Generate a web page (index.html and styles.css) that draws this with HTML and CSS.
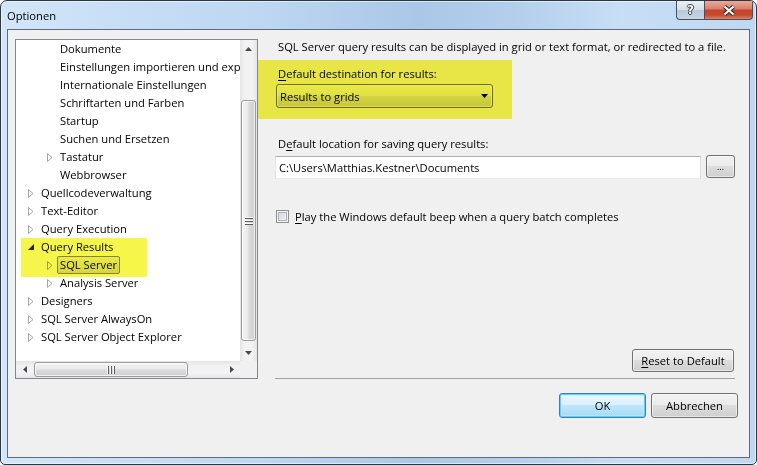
FILE: index.html
```html
<!DOCTYPE html>
<html lang="de">
<head>
<meta charset="utf-8">
<title>Optionen</title>
<link rel="stylesheet" href="styles.css">
</head>
<body>
<div class="window">
  <div class="titlebar">
    <span class="title">Optionen</span>
    <div class="caption-buttons">
      <div class="cap-btn help"><span>?</span></div>
      <div class="cap-btn close">
        <svg width="14" height="11" viewBox="0 0 14 11"><path d="M2.5 1.5 L11.5 9.5 M11.5 1.5 L2.5 9.5" stroke="#3b2622" stroke-width="4.2" fill="none"/><path d="M2.5 1.5 L11.5 9.5 M11.5 1.5 L2.5 9.5" stroke="#ffffff" stroke-width="2.2" fill="none"/></svg>
      </div>
    </div>
  </div>
  <div class="client">
    <div class="main">
      <div class="tree">
        <div class="tree-items">
          <div class="row l2"><span class="exp"></span><span class="lbl">Dokumente</span></div>
          <div class="row l2"><span class="exp"></span><span class="lbl">Einstellungen importieren und exportieren</span></div>
          <div class="row l2"><span class="exp"></span><span class="lbl">Internationale Einstellungen</span></div>
          <div class="row l2"><span class="exp"></span><span class="lbl">Schriftarten und Farben</span></div>
          <div class="row l2"><span class="exp"></span><span class="lbl">Startup</span></div>
          <div class="row l2"><span class="exp"></span><span class="lbl">Suchen und Ersetzen</span></div>
          <div class="row l2"><span class="exp"><svg width="6" height="9" viewBox="0 0 6 9"><path d="M0.5 0.5 L5 4.5 L0.5 8.5 Z" fill="#fff" stroke="#a6a6a6"/></svg></span><span class="lbl">Tastatur</span></div>
          <div class="row l2"><span class="exp"></span><span class="lbl">Webbrowser</span></div>
          <div class="row l1"><span class="exp"><svg width="6" height="9" viewBox="0 0 6 9"><path d="M0.5 0.5 L5 4.5 L0.5 8.5 Z" fill="#fff" stroke="#a6a6a6"/></svg></span><span class="lbl">Quellcodeverwaltung</span></div>
          <div class="row l1"><span class="exp"><svg width="6" height="9" viewBox="0 0 6 9"><path d="M0.5 0.5 L5 4.5 L0.5 8.5 Z" fill="#fff" stroke="#a6a6a6"/></svg></span><span class="lbl">Text-Editor</span></div>
          <div class="row l1"><span class="exp"><svg width="6" height="9" viewBox="0 0 6 9"><path d="M0.5 0.5 L5 4.5 L0.5 8.5 Z" fill="#fff" stroke="#a6a6a6"/></svg></span><span class="lbl">Query Execution</span></div>
          <div class="row l1"><span class="exp"><svg width="6" height="6" viewBox="0 0 6 6"><path d="M6 0 V6 H0 Z" fill="#262626"/></svg></span><span class="lbl">Query Results</span></div>
          <div class="row l2"><span class="exp"><svg width="6" height="9" viewBox="0 0 6 9"><path d="M0.5 0.5 L5 4.5 L0.5 8.5 Z" fill="#fff" stroke="#a6a6a6"/></svg></span><span class="lbl selected">SQL Server</span></div>
          <div class="row l2"><span class="exp"><svg width="6" height="9" viewBox="0 0 6 9"><path d="M0.5 0.5 L5 4.5 L0.5 8.5 Z" fill="#fff" stroke="#a6a6a6"/></svg></span><span class="lbl">Analysis Server</span></div>
          <div class="row l1"><span class="exp"><svg width="6" height="9" viewBox="0 0 6 9"><path d="M0.5 0.5 L5 4.5 L0.5 8.5 Z" fill="#fff" stroke="#a6a6a6"/></svg></span><span class="lbl">Designers</span></div>
          <div class="row l1"><span class="exp"><svg width="6" height="9" viewBox="0 0 6 9"><path d="M0.5 0.5 L5 4.5 L0.5 8.5 Z" fill="#fff" stroke="#a6a6a6"/></svg></span><span class="lbl">SQL Server AlwaysOn</span></div>
          <div class="row l1"><span class="exp"><svg width="6" height="9" viewBox="0 0 6 9"><path d="M0.5 0.5 L5 4.5 L0.5 8.5 Z" fill="#fff" stroke="#a6a6a6"/></svg></span><span class="lbl">SQL Server Object Explorer</span></div>
        </div>
        <div class="vscroll">
          <div class="sb-btn"><svg width="7" height="4" viewBox="0 0 7 4"><path d="M0 4 L3.5 0 L7 4 Z" fill="#4a4a4a"/></svg></div>
          <div class="vtrack">
            <div class="vthumb" style="margin-top:43px;height:241px">
              <svg width="8" height="8" viewBox="0 0 8 8"><path d="M0 1.5 H8 M0 4.5 H8 M0 7.5 H8" stroke="#5c5c5c"/><path d="M0 0.5 H8 M0 3.5 H8 M0 6.5 H8" stroke="#fafafa"/></svg>
            </div>
          </div>
          <div class="sb-btn"><svg width="7" height="4" viewBox="0 0 7 4"><path d="M0 0 L3.5 4 L7 0 Z" fill="#4a4a4a"/></svg></div>
        </div>
        <div class="hscroll">
          <div class="sb-btn"><svg width="4" height="7" viewBox="0 0 4 7"><path d="M4 0 L0 3.5 L4 7 Z" fill="#4a4a4a"/></svg></div>
          <div class="htrack">
            <div class="hthumb" style="margin-left:1px;width:154px">
              <svg width="8" height="8" viewBox="0 0 8 8"><path d="M1.5 0 V8 M4.5 0 V8 M7.5 0 V8" stroke="#5c5c5c"/><path d="M0.5 0 V8 M3.5 0 V8 M6.5 0 V8" stroke="#fafafa"/></svg>
            </div>
          </div>
          <div class="sb-btn"><svg width="4" height="7" viewBox="0 0 4 7"><path d="M0 0 L4 3.5 L0 7 Z" fill="#4a4a4a"/></svg></div>
        </div>
        <div class="corner"></div>
      </div>
      <div class="panel">
        <p class="desc">SQL Server query results can be displayed in grid or text format, or redirected to a file.</p>
        <div class="label l-dest"><u>D</u>efault destination for results:</div>
        <div class="combo"><span>Results to grids</span><svg width="7" height="4" viewBox="0 0 7 4"><path d="M0 0 H7 L3.5 4 Z" fill="#000"/></svg></div>
        <div class="label l-loc">D<u>e</u>fault location for saving query results:</div>
        <div class="path-row">
          <div class="textbox">C:\Users\Matthias.Kestner\Documents</div>
          <div class="btn browse">...</div>
        </div>
        <div class="check-row"><span class="checkbox"></span><span class="check-label"><u>P</u>lay the Windows default beep when a query batch completes</span></div>
        <div class="reset-row"><div class="btn reset"><u>R</u>eset to Default</div></div>
      </div>
    </div>
    <div class="footer">
      <div class="btn ok">OK</div>
      <div class="btn cancel">Abbrechen</div>
    </div>
  </div>
  <div class="hl hl-tree"></div>
  <div class="hl hl-dest"></div>
</div>
</body>
</html>
```

FILE: styles.css
```css
* { box-sizing: border-box; }
html, body { margin: 0; padding: 0; }
body {
  width: 757px;
  height: 465px;
  overflow: hidden;
  background: #ffffff;
  font-family: "Open Sans", "Noto Sans", sans-serif;
  font-size: 11.2px;
  color: #000;
}
u { text-decoration: underline; text-underline-offset: 2px; }

.window {
  position: relative;
  width: 757px;
  height: 465px;
  border: 1px solid #2c3744;
  border-radius: 7px 7px 5px 5px;
  background: linear-gradient(90deg, #d3e6f9 0%, #c6ddf5 18%, #bdd7f2 35%, #aac7e7 55%, #b3cfec 68%, #c7def5 82%, #bfd8f1 100%);
  box-shadow: inset 0 0 0 1px rgba(255,255,255,0.55);
  display: flex;
  flex-direction: column;
  overflow: hidden;
}

.titlebar {
  height: 28px;
  flex: none;
  display: flex;
  justify-content: space-between;
  align-items: flex-start;
}
.title {
  padding: 7px 0 0 6px;
  line-height: 15px;
  color: #000;
}
.caption-buttons {
  display: flex;
  margin-right: 3px;
}
.cap-btn {
  height: 19px;
  border: 1px solid #46505c;
  border-top: none;
  display: flex;
  align-items: center;
  justify-content: center;
}
.help {
  width: 28px;
  border-right: none;
  border-radius: 0 0 0 4px;
  background: linear-gradient(#e9eff6 0%, #d5dfea 48%, #b9c8d8 52%, #c9d6e3 100%);
}
.help span {
  font-family: "DejaVu Sans", sans-serif;
  font-weight: bold;
  font-size: 12px;
  line-height: 12px;
  color: #f4f6f8;
  text-shadow: 1px 0 0 #3c4652, -1px 0 0 #3c4652, 0 1px 0 #3c4652, 0 -1px 0 #3c4652;
}
.close {
  width: 49px;
  border-radius: 0 0 4px 0;
  background: linear-gradient(#e9aa9b 0%, #d8836f 42%, #c4442b 52%, #c54a2f 78%, #dd8367 100%);
}

.client {
  flex: 1;
  margin: 0 6px 6px 6px;
  border: 1px solid #5d6b7a;
  background: #f0f0f0;
  display: flex;
  flex-direction: column;
  padding: 9px 0 0 7px;
}
.main {
  display: flex;
  gap: 17px;
  height: 340px;
}

/* tree */
.tree {
  width: 243px;
  height: 340px;
  border: 1px solid #828790;
  background: #fff;
  display: grid;
  grid-template-columns: 224px 17px;
  grid-template-rows: 321px 17px;
}
.tree-items {
  overflow: hidden;
  padding-left: 6px;
}
.row {
  height: 18px;
  display: flex;
  align-items: center;
  white-space: nowrap;
}
.row.l2 { padding-left: 19px; }
.exp {
  width: 16px;
  height: 18px;
  flex: none;
  display: flex;
  align-items: center;
  justify-content: center;
  padding-left: 1px;
}
.lbl {
  height: 18px;
  line-height: 16px;
  padding: 0 2px;
  border: 1px solid transparent;
  border-radius: 2px;
}
.lbl.selected {
  border-color: #8d8d8d;
  background: linear-gradient(#f4f4f4, #dedede);
}

.vscroll {
  display: flex;
  flex-direction: column;
  background: linear-gradient(90deg, #e4e4e4 0%, #f1f1f1 25%, #f3f3f3 70%, #e6e6e6 100%);
}
.sb-btn {
  flex: none;
  width: 17px;
  height: 17px;
  display: flex;
  align-items: center;
  justify-content: center;
}
.vtrack {
  flex: 1;
  display: flex;
  flex-direction: column;
}
.vthumb {
  margin-left: 1px;
  margin-right: 1px;
  border: 1px solid #9b9b9b;
  border-radius: 3px;
  background: linear-gradient(90deg, #f4f4f4 0%, #e9e9e9 45%, #d9d9d9 55%, #d0d0d0 100%);
  box-shadow: inset 0 0 0 1px rgba(255,255,255,0.7);
  display: flex;
  align-items: center;
  justify-content: center;
}
.hscroll {
  display: flex;
  background: linear-gradient(#e4e4e4 0%, #f1f1f1 25%, #f3f3f3 70%, #e6e6e6 100%);
}
.htrack {
  flex: 1;
  display: flex;
}
.hthumb {
  margin-top: 1px;
  margin-bottom: 1px;
  border: 1px solid #9b9b9b;
  border-radius: 3px;
  background: linear-gradient(#f4f4f4 0%, #e9e9e9 45%, #d9d9d9 55%, #d0d0d0 100%);
  box-shadow: inset 0 0 0 1px rgba(255,255,255,0.7);
  display: flex;
  align-items: center;
  justify-content: center;
}
.corner { background: #f0f0f0; }

/* right panel */
.panel {
  width: 460px;
  height: 340px;
  border-bottom: 1px solid #a0a0a0;
  display: flex;
  flex-direction: column;
}
.desc {
  margin: 0;
  padding-left: 3px;
  line-height: 15px;
  white-space: nowrap;
}
.label {
  padding-left: 3px;
  line-height: 15px;
  white-space: nowrap;
}
.l-dest { margin-top: 12px; }
.l-loc { margin-top: 28px; }
.combo {
  margin: 3px 0 0 1px;
  width: 217px;
  height: 24px;
  border: 1px solid #707070;
  border-radius: 3px;
  background: linear-gradient(#f2f2f2 0%, #ebebeb 49%, #dddddd 50%, #cfcfcf 100%);
  box-shadow: inset 0 0 0 1px rgba(255,255,255,0.6);
  display: flex;
  align-items: center;
  justify-content: space-between;
  padding: 0 4px 0 3px;
}
.path-row {
  margin-top: 4px;
  display: flex;
  align-items: flex-start;
}
.textbox {
  margin-top: 1px;
  width: 427px;
  height: 23px;
  background: #fff;
  border: 1px solid;
  border-color: #abadb3 #dbdfe6 #e3e9ef #e2e3ea;
  padding-left: 3px;
  line-height: 21px;
  white-space: nowrap;
}
.btn {
  border: 1px solid #707070;
  border-radius: 3px;
  background: linear-gradient(#f2f2f2 0%, #ebebeb 49%, #dddddd 50%, #cfcfcf 100%);
  box-shadow: inset 0 0 0 1px rgba(252,252,252,0.6);
  display: flex;
  align-items: center;
  justify-content: center;
  line-height: 15px;
  white-space: nowrap;
}
.browse {
  margin-left: 5px;
  width: 29px;
  height: 23px;
  font-size: 9px;
}
.check-row {
  margin-top: 30px;
  display: flex;
  align-items: center;
  height: 15px;
}
.checkbox {
  margin-left: 1px;
  width: 13px;
  height: 13px;
  border: 1px solid #8e8f8f;
  background: linear-gradient(135deg, #cbcfd5 0%, #e7e9ec 60%, #f6f6f6 100%);
  box-shadow: inset 0 0 0 1px #f4f4f4, inset 0 0 0 2px #aeb3b9;
}
.check-label {
  margin-left: 6px;
  line-height: 15px;
}
.reset-row {
  margin-top: auto;
  margin-bottom: 6px;
  display: flex;
  justify-content: flex-end;
  padding-right: 1px;
}
.reset {
  width: 102px;
  height: 23px;
}

.footer {
  display: flex;
  justify-content: flex-end;
  gap: 5px;
  padding-top: 14px;
  padding-right: 11px;
}
.footer .btn {
  width: 87px;
  height: 25px;
}
.btn.ok {
  border-color: #3c7fb1;
  background: linear-gradient(#eaf6fd 0%, #d9f0fc 49%, #bee6fd 50%, #a7d9f5 100%);
  box-shadow: inset 0 0 0 1px #5fd0f7, inset 0 0 0 2px rgba(190,240,255,0.5);
}

/* yellow annotations */
.hl {
  position: absolute;
  background: #f6f54a;
  mix-blend-mode: multiply;
}
.hl-tree { left: 20px; top: 237px; width: 126px; height: 39px; }
.hl-dest { left: 257px; top: 59px; width: 254px; height: 59px; }
```
